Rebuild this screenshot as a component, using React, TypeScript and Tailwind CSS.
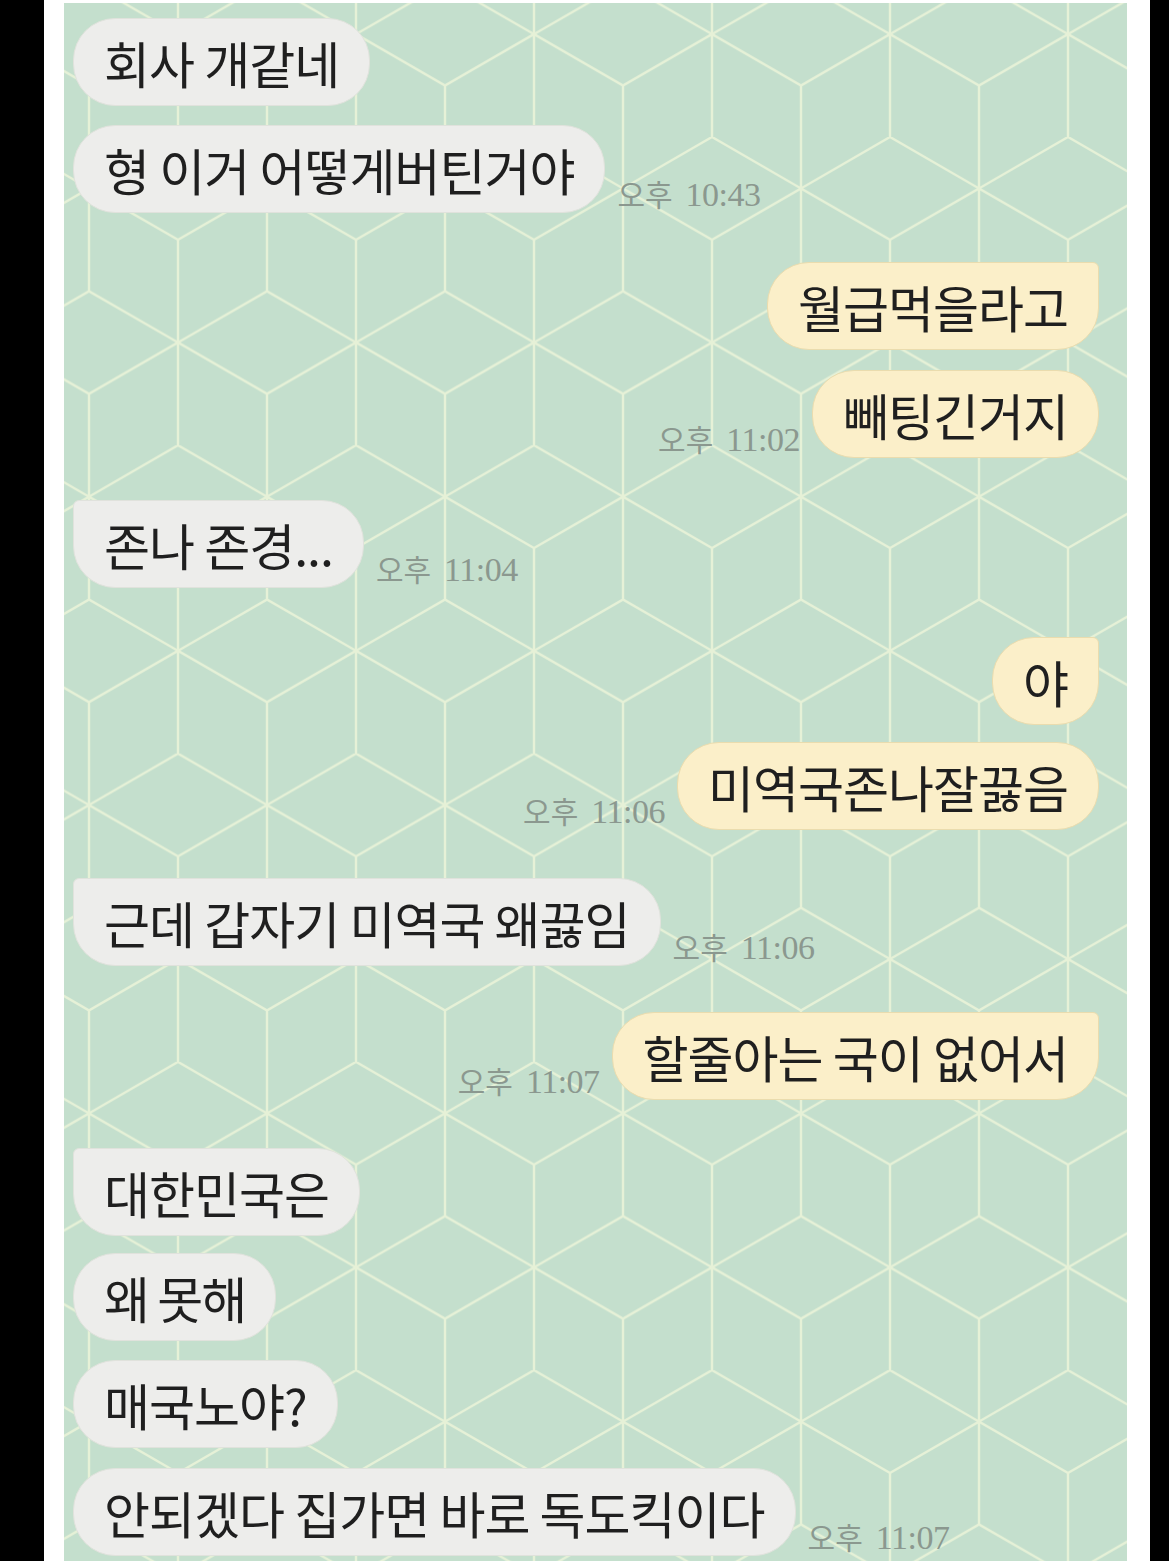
import React from 'react'

type Msg = {
  side: 'left' | 'right'
  text: string
  time?: string
  mt: string
  tail?: boolean
  track?: string
}

const messages: Msg[] = [
  { side: 'left', text: '회사 개같네', mt: 'mt-[15px]' },
  { side: 'left', text: '형 이거 어떻게버틴거야', time: '10:43', mt: 'mt-[19px]' },
  { side: 'right', text: '월급먹을라고', mt: 'mt-[49px]', tail: true },
  { side: 'right', text: '빼팅긴거지', time: '11:02', mt: 'mt-[20px]' },
  { side: 'left', text: '존나 존경...', time: '11:04', mt: 'mt-[42px]', tail: true },
  { side: 'right', text: '야', mt: 'mt-[49px]', tail: true },
  { side: 'right', text: '미역국존나잘끓음', time: '11:06', mt: 'mt-[17px]' },
  { side: 'left', text: '근데 갑자기 미역국 왜끓임', time: '11:06', mt: 'mt-[48px]', tail: true },
  { side: 'right', text: '할줄아는 국이 없어서', time: '11:07', mt: 'mt-[46px]', tail: true },
  { side: 'left', text: '대한민국은', mt: 'mt-[48px]', tail: true },
  { side: 'left', text: '왜 못해', mt: 'mt-[17px]', track: 'tracking-[-2px]' },
  { side: 'left', text: '매국노야?', mt: 'mt-[19px]' },
  { side: 'left', text: '안되겠다 집가면 바로 독도킥이다', time: '11:07', mt: 'mt-[20px]' },
]

function Time({ time }: { time: string }) {
  return (
    <div className="mb-[1px] flex items-baseline gap-[13px] leading-none text-[#8b988f] whitespace-nowrap">
      <span className="text-[30px] font-['Noto_Sans_CJK_KR',sans-serif]">오후</span>
      <span className="text-[34px] tracking-[-0.5px] font-['Liberation_Serif',serif]">{time}</span>
    </div>
  )
}

function Bubble({ msg }: { msg: Msg }) {
  const left = msg.side === 'left'
  return (
    <div
      className={`flex h-[88px] items-center rounded-[42px] px-[30px] whitespace-nowrap text-[50px] text-[#1f1f1f] font-['Noto_Sans_CJK_KR',sans-serif] font-normal
        ${msg.track ?? 'tracking-[-1px]'}
        ${left ? 'bg-[#ededeb] border border-[#e0e2dc]' : 'bg-[#fbefc9] border border-[#eadcae]'}
        ${msg.tail ? (left ? 'rounded-tl-[6px]' : 'rounded-tr-[6px]') : ''}`}
    >
      {msg.text}
    </div>
  )
}

export default function App() {
  return (
    <div className="min-h-[1561px] bg-black">
      <div className="ml-[44px] h-[1561px] w-[1106px] bg-white pl-[20px] pr-[23px] pt-[3px]">
        <div className="relative h-[1558px] overflow-hidden bg-[#c4dfcd]">
          {/* 배경 큐브 패턴 */}
          <svg className="absolute inset-0 h-full w-full" aria-hidden="true">
            <defs>
              <pattern id="cubes" width="178" height="308.3" patternUnits="userSpaceOnUse" x="25" y="134">
                <path
                  d="M89 0L178 51.4V154.2L89 205.5L0 154.2V51.4Z M89 102.8L0 51.4 M89 102.8L178 51.4 M89 102.8V308.3 M0 256.9L89 205.5L178 256.9 M0 256.9V308.3 M178 256.9V308.3 M0 0V51.4 M178 0V51.4"
                  fill="none"
                  stroke="#e6f1d7"
                  strokeWidth="2.4"
                />
              </pattern>
            </defs>
            <rect width="100%" height="100%" fill="url(#cubes)" />
          </svg>

          <div className="relative flex flex-col pl-[9px] pr-[28px]">
            {messages.map((m, i) => (
              <div
                key={i}
                className={`flex items-end gap-[12px] ${m.mt} ${m.side === 'right' ? 'justify-end' : 'justify-start'}`}
              >
                {m.side === 'right' && m.time && <Time time={m.time} />}
                <Bubble msg={m} />
                {m.side === 'left' && m.time && <Time time={m.time} />}
              </div>
            ))}
          </div>
        </div>
      </div>
    </div>
  )
}
